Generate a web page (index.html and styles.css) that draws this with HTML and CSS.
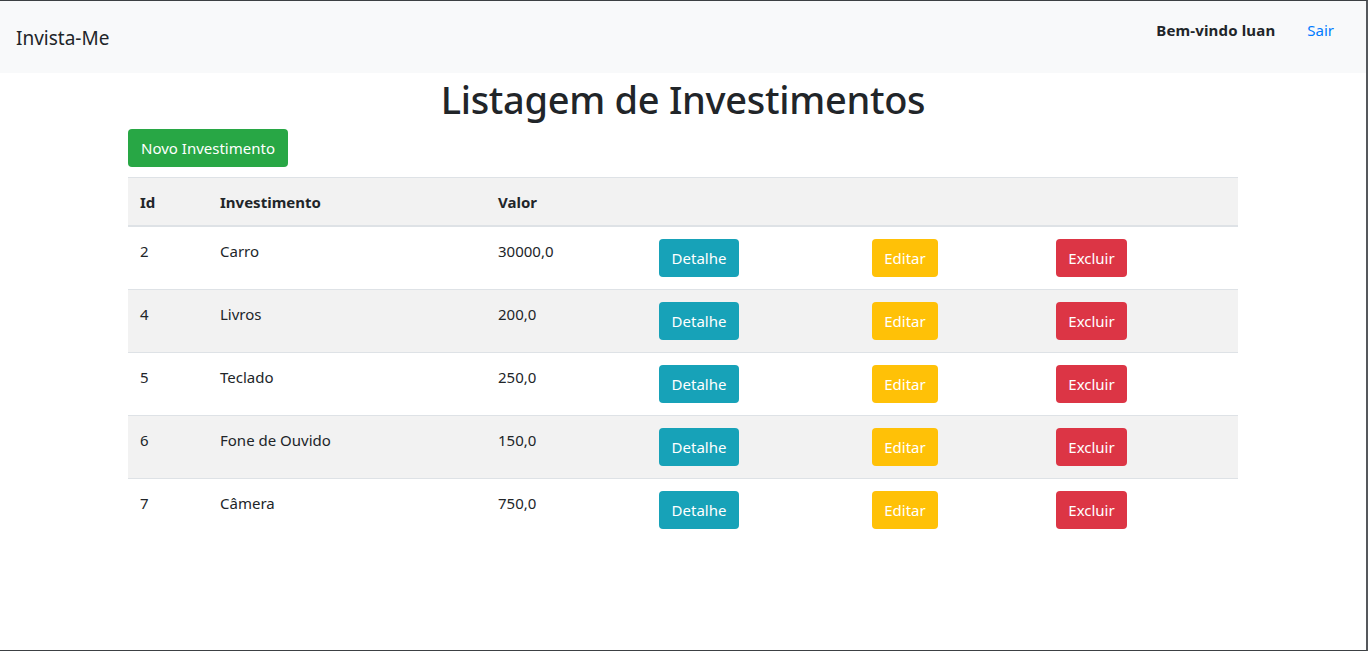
FILE: index.html
```html
<!DOCTYPE html>
<html lang="pt-BR">
<head>
<meta charset="utf-8">
<title>Invista-Me</title>
<link rel="stylesheet" href="styles.css">
</head>
<body>
<div class="frame">
  <nav class="navbar">
    <a class="brand" href="#">Invista-Me</a>
    <div class="nav-right">
      <span class="welcome">Bem-vindo luan</span>
      <a class="logout" href="#">Sair</a>
    </div>
  </nav>
  <main class="container">
    <h1 class="title">Listagem de Investimentos</h1>
    <a class="btn btn-success" href="#">Novo Investimento</a>
    <table class="table">
      <colgroup>
        <col class="c-id"><col class="c-name"><col class="c-val"><col class="c-det"><col class="c-edit"><col class="c-del">
      </colgroup>
      <tr class="head">
        <th>Id</th><th>Investimento</th><th>Valor</th><th></th><th></th><th></th>
      </tr>
      <tr>
        <td>2</td><td>Carro</td><td>30000,0</td>
        <td><a class="btn btn-info" href="#">Detalhe</a></td>
        <td><a class="btn btn-warning" href="#">Editar</a></td>
        <td><a class="btn btn-danger" href="#">Excluir</a></td>
      </tr>
      <tr class="alt">
        <td>4</td><td>Livros</td><td>200,0</td>
        <td><a class="btn btn-info" href="#">Detalhe</a></td>
        <td><a class="btn btn-warning" href="#">Editar</a></td>
        <td><a class="btn btn-danger" href="#">Excluir</a></td>
      </tr>
      <tr>
        <td>5</td><td>Teclado</td><td>250,0</td>
        <td><a class="btn btn-info" href="#">Detalhe</a></td>
        <td><a class="btn btn-warning" href="#">Editar</a></td>
        <td><a class="btn btn-danger" href="#">Excluir</a></td>
      </tr>
      <tr class="alt">
        <td>6</td><td>Fone de Ouvido</td><td>150,0</td>
        <td><a class="btn btn-info" href="#">Detalhe</a></td>
        <td><a class="btn btn-warning" href="#">Editar</a></td>
        <td><a class="btn btn-danger" href="#">Excluir</a></td>
      </tr>
      <tr>
        <td>7</td><td>Câmera</td><td>750,0</td>
        <td><a class="btn btn-info" href="#">Detalhe</a></td>
        <td><a class="btn btn-warning" href="#">Editar</a></td>
        <td><a class="btn btn-danger" href="#">Excluir</a></td>
      </tr>
    </table>
  </main>
</div>
</body>
</html>
```

FILE: styles.css
```css
* { box-sizing: border-box; }
html, body { margin: 0; padding: 0; }
body {
  font-family: "Noto Sans", "Open Sans", sans-serif;
  font-size: 16px;
  line-height: 1.5;
  color: #212529;
  background: #fff;
}
.frame {
  width: 1368px;
  height: 651px;
  border-top: 1px solid #3c4043;
  border-right: 2px solid #55585c;
  border-bottom: 1px solid #3c4043;
  overflow: hidden;
}
.navbar {
  height: 72px;
  background: #f8f9fa;
  display: flex;
  align-items: center;
  justify-content: space-between;
  padding: 0 32px 0 16px;
}
.brand {
  font-size: 19px;
  color: #212529;
  text-decoration: none;
  margin-top: 3px;
}
.nav-right {
  display: flex;
  align-items: center;
  gap: 32px;
  margin-top: -14px;
  font-size: 15px;
}
.welcome { font-weight: 700; letter-spacing: 0.15px; }
.logout { color: #007bff; text-decoration: none; }
.container {
  width: 1110px;
  margin: 0 auto;
}
.title {
  margin: 0 0 8px;
  text-align: center;
  font-size: 38px;
  font-weight: 500;
  line-height: 48px;
  letter-spacing: -0.3px;
  padding-top: 2px;
  height: 48px;
}
.btn {
  display: inline-block;
  height: 38px;
  padding: 0 12px;
  border-radius: 4px;
  color: #fff;
  text-decoration: none;
  font-size: 15px;
  line-height: 38px;
  white-space: nowrap;
}
.btn-success { background: #28a745; width: 160px; text-align: center; }
.btn-info { background: #17a2b8; width: 80px; text-align: center; }
.btn-warning { background: #ffc107; width: 66px; text-align: center; }
.btn-danger { background: #dc3545; width: 71px; text-align: center; }
.table {
  width: 1110px;
  margin-top: 10px;
  border-collapse: collapse;
  table-layout: fixed;
  font-size: 15px;
}
.c-id { width: 80px; }
.c-name { width: 278px; }
.c-val { width: 161px; }
.c-det { width: 213px; }
.c-edit { width: 184px; }
.c-del { width: 194px; }
.table th, .table td {
  padding: 12px;
  text-align: left;
  vertical-align: top;
  border-top: 1px solid #dee2e6;
  line-height: 24px;
}
.table th { font-weight: 700; padding-bottom: 11px; border-bottom: 2px solid #dee2e6; }
.head, .alt { background: #f2f2f2; }
```
